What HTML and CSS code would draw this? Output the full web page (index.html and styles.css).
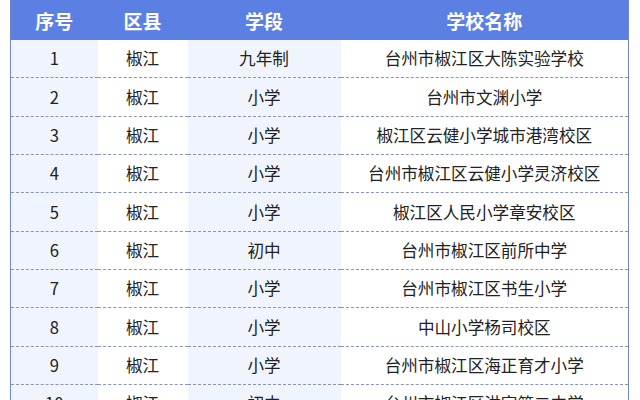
FILE: index.html
```html
<!DOCTYPE html>
<html lang="zh">
<head>
<meta charset="utf-8">
<link rel="stylesheet" href="styles.css">
</head>
<body>
<table class="schools">
  <colgroup>
    <col class="c1"><col class="c2"><col class="c3"><col class="c4">
  </colgroup>
  <thead>
    <tr><th>序号</th><th>区县</th><th>学段</th><th>学校名称</th></tr>
  </thead>
  <tbody>
    <tr><td>1</td><td>椒江</td><td>九年制</td><td>台州市椒江区大陈实验学校</td></tr>
    <tr><td>2</td><td>椒江</td><td>小学</td><td>台州市文渊小学</td></tr>
    <tr><td>3</td><td>椒江</td><td>小学</td><td>椒江区云健小学城市港湾校区</td></tr>
    <tr><td>4</td><td>椒江</td><td>小学</td><td>台州市椒江区云健小学灵济校区</td></tr>
    <tr><td>5</td><td>椒江</td><td>小学</td><td>椒江区人民小学章安校区</td></tr>
    <tr><td>6</td><td>椒江</td><td>初中</td><td>台州市椒江区前所中学</td></tr>
    <tr><td>7</td><td>椒江</td><td>小学</td><td>台州市椒江区书生小学</td></tr>
    <tr><td>8</td><td>椒江</td><td>小学</td><td>中山小学杨司校区</td></tr>
    <tr><td>9</td><td>椒江</td><td>小学</td><td>台州市椒江区海正育才小学</td></tr>
    <tr><td>10</td><td>椒江</td><td>初中</td><td>台州市椒江区洪家第二中学</td></tr>
  </tbody>
</table>
</body>
</html>
```
FILE: styles.css
```css
html, body {
  margin: 0;
  padding: 0;
  background: #ffffff;
}
body {
  padding-left: 10px;
  font-family: "Noto Sans CJK SC", "Noto Sans", sans-serif;
  color: #222222;
}
.schools {
  width: 619px;
  table-layout: fixed;
  border-collapse: collapse;
  border-left: 1.5px solid #6f86cf;
  border-right: 1.5px solid #6f86cf;
}
.c1 { width: 87px; }
.c2 { width: 90px; }
.c3 { width: 153px; }
.c4 { width: 288px; }
.schools th {
  height: 40px;
  padding: 0;
  background: #5c7fe3;
  color: #ffffff;
  font-size: 19px;
  font-weight: 700;
  text-align: center;
  vertical-align: middle;
}
.schools td {
  height: 37.33px;
  padding: 0;
  font-size: 16.6px;
  text-align: center;
  vertical-align: middle;
  border-bottom: 1px dashed #8595bb;
  background: #ffffff;
  line-height: 1;
}
.schools td:nth-child(1),
.schools td:nth-child(3) {
  background: #f0f4fd;
}
```
